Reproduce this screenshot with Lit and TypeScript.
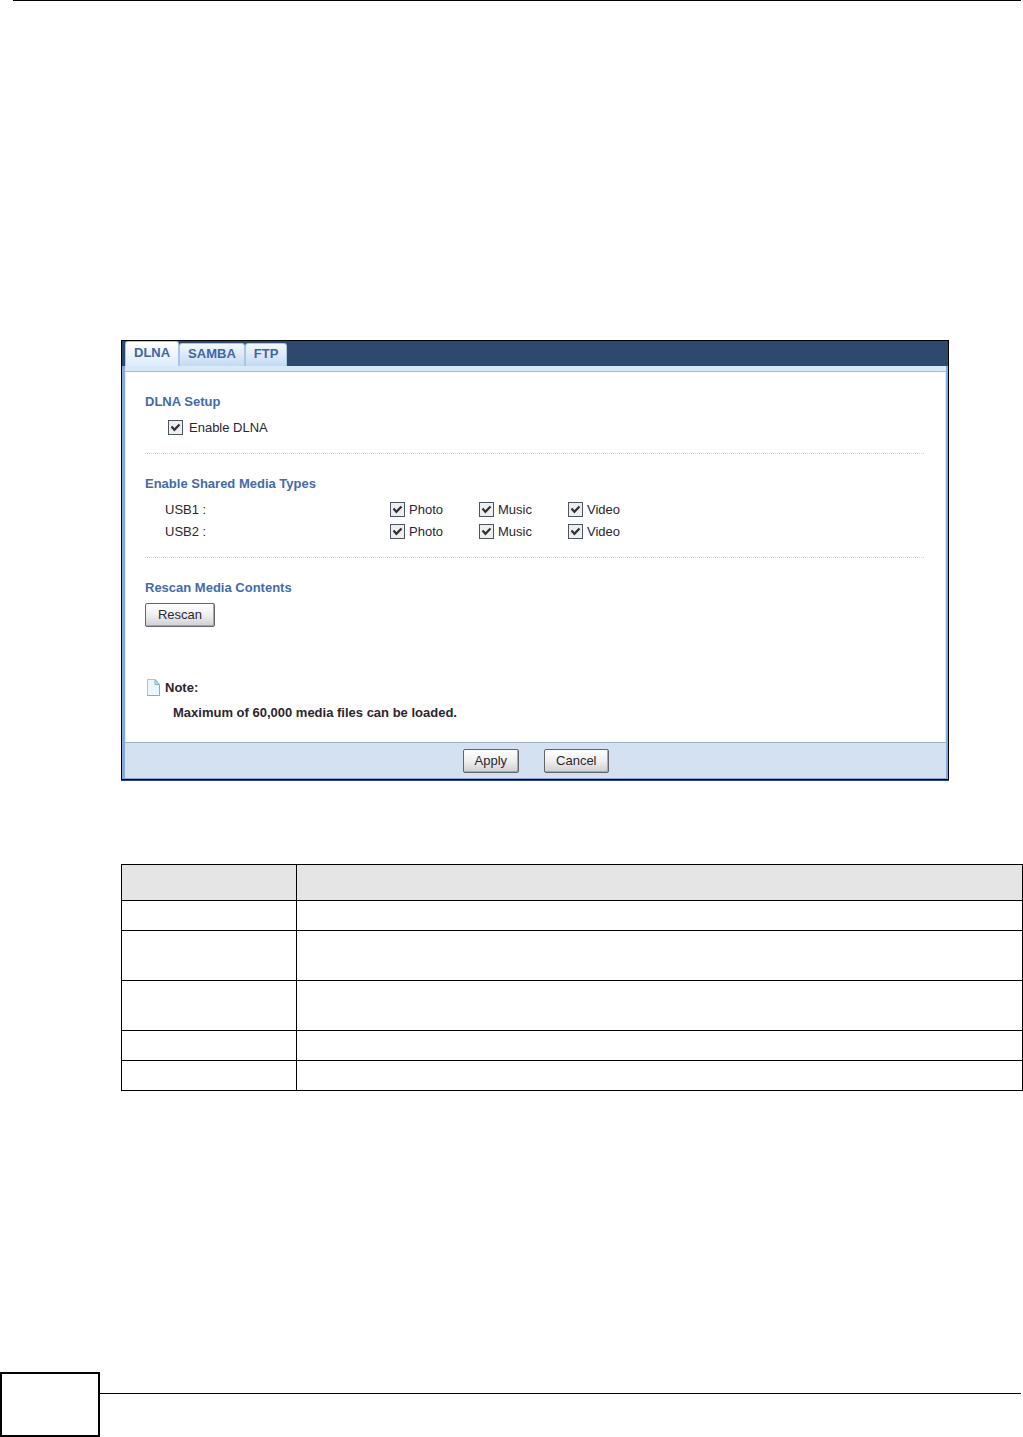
import { LitElement, html, css, svg } from "lit";
import { customElement, state } from "lit/decorators.js";

const TABS = ["DLNA", "SAMBA", "FTP"];
const DEVICES = ["USB1", "USB2"];
const MEDIA = ["Photo", "Music", "Video"];
const ROWS = ["short", "tall", "tall", "short", "short"];

@customElement("media-panel")
class MediaPanel extends LitElement {
  @state() private active = "DLNA";

  static styles = css`
    :host {
      display: block;
      border: 1px solid #000;
      box-shadow: 0 1px 0 #2c4a7c;
      background: #fff;
      color: #2b2630;
      font: 13px/22px "Liberation Sans", Arial, sans-serif;
    }
    .tabs {
      display: flex;
      align-items: flex-end;
      height: 25px;
      padding-left: 3px;
      background: #2f486e;
    }
    .tab {
      box-sizing: border-box;
      height: 23px;
      padding: 0 8px 2px;
      border: 1px solid #a9c6ea;
      border-bottom: 0;
      border-radius: 3px 3px 0 0;
      background: linear-gradient(#f2f8fe, #c3daf3);
      color: #3f66a5;
      font: bold 13px/20px "Liberation Sans", Arial, sans-serif;
    }
    .tab.active {
      height: 25px;
      background: linear-gradient(#fff, #dcebfb);
    }
    .frame {
      border: solid #84a9da;
      border-width: 0 2px 1px 3px;
    }
    .strip {
      height: 5px;
      background: #d6e8fa;
      border-bottom: 1px solid #a3bbd3;
    }
    .body {
      padding: 0 21px 18px 19px;
      border: solid #e3effb;
      border-width: 0 1px;
    }
    .section {
      padding: 18px 0 14px;
    }
    .divided {
      border-bottom: 1px dotted #d0d0d0;
    }
    h2 {
      margin: 0 0 3px;
      color: #446ba8;
      font-size: 13px;
      line-height: 24px;
    }
    .row {
      display: grid;
      grid-template-columns: 225px 89px 89px 89px;
      padding-left: 20px;
    }
    .check {
      display: flex;
      align-items: center;
      gap: 4px;
    }
    .single {
      gap: 6px;
      padding-left: 23px;
    }
    input {
      appearance: none;
      box-sizing: border-box;
      width: 15px;
      height: 15px;
      margin: 0 0 2px;
      border: 1px solid #4b5563;
      background: #eeeeec;
    }
    input:checked {
      background: #eeeeec
        url("data:image/svg+xml,%3Csvg xmlns='http://www.w3.org/2000/svg' viewBox='0 0 13 13'%3E%3Cpath d='M2.500 5.600 5.400 8.800 10.500 3.400' fill='none' stroke='%23303038' stroke-width='2.2'/%3E%3C/svg%3E");
    }
    .btn {
      box-sizing: border-box;
      height: 24px;
      padding: 0 11px;
      border: 1px solid #62656b;
      border-radius: 2px;
      background: linear-gradient(#fff, #efeff1 50%, #cfcfd3);
      box-shadow: inset -1px -1px 0 #a8a8ac;
      color: #2b2630;
      font: 13px/20px "Liberation Sans", Arial, sans-serif;
    }
    .wide {
      min-width: 70px;
    }
    .note {
      display: flex;
      align-items: center;
      gap: 4px;
      margin-top: 36px;
      font-weight: bold;
    }
    .note p,
    .message {
      margin: 0;
    }
    .message {
      padding: 3px 0 0 28px;
      font-weight: bold;
    }
    .actions {
      display: flex;
      justify-content: center;
      gap: 25px;
      padding: 6px 0 5px;
      border-top: 1px solid #9fb0c4;
      background: #d3e1f0;
    }
  `;

  render() {
    return html`
      <div class="tabs" role="tablist">
        ${TABS.map(
          (t) => html`<button
            class="tab ${t === this.active ? "active" : ""}"
            role="tab"
            aria-selected=${t === this.active}
            @click=${() => (this.active = t)}
          >${t}</button>`
        )}
      </div>
      <div class="frame">
        <div class="strip"></div>
        <div class="body">
          <section class="section divided">
            <h2>DLNA Setup</h2>
            <label class="check single"><input type="checkbox" checked />Enable DLNA</label>
          </section>
          <section class="section divided">
            <h2>Enable Shared Media Types</h2>
            ${DEVICES.map(
              (d) => html`<div class="row">
                <span>${d} :</span>
                ${MEDIA.map(
                  (m) => html`<label class="check"><input type="checkbox" checked />${m}</label>`
                )}
              </div>`
            )}
          </section>
          <section class="section">
            <h2>Rescan Media Contents</h2>
            <button class="btn wide">Rescan</button>
          </section>
          <div class="note">
            <svg width="16" height="18" viewBox="0 0 16 18" aria-hidden="true">
              ${svg`<path d="M2.500 .5H10L14.500 5.500V16.500H2.500Z" fill="#edf6fd" stroke="#9fc6e6"/>
              <path d="M10 .5V5.500H14.500Z" fill="#bcdcf4" stroke="#7fb0dc"/>
              <path d="M14.500 6V16.500H2" fill="none" stroke="#78aeda"/>`}
            </svg>
            <p>Note:</p>
          </div>
          <p class="message">Maximum of 60,000 media files can be loaded.</p>
        </div>
        <div class="actions">
          <button class="btn">Apply</button>
          <button class="btn">Cancel</button>
        </div>
      </div>
    `;
  }
}

@customElement("app-root")
class AppRoot extends LitElement {
  static styles = css`
    :host {
      display: flex;
      flex-direction: column;
      min-height: 100vh;
      background: #fff;
    }
    .top {
      margin: 0 2px 0 13px;
      border-top: 1px solid #000;
    }
    .content {
      padding: 339px 0 0 121px;
    }
    media-panel {
      margin-right: 74px;
    }
    table {
      width: 100%;
      margin-top: 84px;
      border-collapse: separate;
      border-spacing: 0;
      border: solid #000;
      border-width: 1px 0 0 1px;
    }
    th,
    td {
      box-sizing: border-box;
      padding: 0;
      border: solid #000;
      border-width: 0 1px 1px 0;
    }
    th {
      height: 36px;
      background: #e5e5e5;
    }
    .key {
      width: 175px;
    }
    .short {
      height: 30px;
    }
    .tall {
      height: 50px;
    }
    .bottom {
      display: flex;
      margin-top: auto;
      padding-right: 2px;
    }
    .number {
      box-sizing: border-box;
      width: 100px;
      height: 65px;
      border: 2px solid #000;
    }
    .rule {
      flex: 1;
      margin-top: 21px;
      border-top: 1px solid #000;
    }
  `;

  render() {
    return html`
      <div class="top"></div>
      <main class="content">
        <media-panel></media-panel>
        <table>
          <thead>
            <tr><th class="key"></th><th></th></tr>
          </thead>
          <tbody>
            ${ROWS.map((r) => html`<tr><td class=${r}></td><td class=${r}></td></tr>`)}
          </tbody>
        </table>
      </main>
      <footer class="bottom">
        <div class="number"></div>
        <div class="rule"></div>
      </footer>
    `;
  }
}
